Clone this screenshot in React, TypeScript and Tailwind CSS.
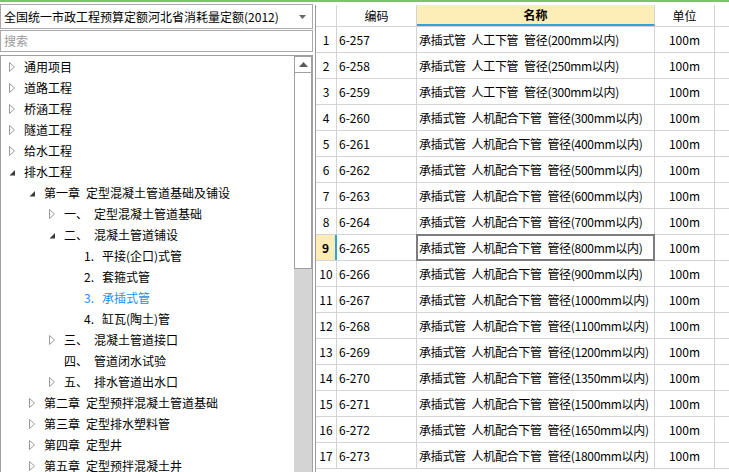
import React from 'react';

type TreeNode = {
  level: number;
  icon?: 'open' | 'closed';
  no?: string;
  label: string;
  active?: boolean;
};

const tree: TreeNode[] = [
  { level: 0, icon: 'closed', label: '通用项目' },
  { level: 0, icon: 'closed', label: '道路工程' },
  { level: 0, icon: 'closed', label: '桥涵工程' },
  { level: 0, icon: 'closed', label: '隧道工程' },
  { level: 0, icon: 'closed', label: '给水工程' },
  { level: 0, icon: 'open', label: '排水工程' },
  { level: 1, icon: 'open', no: '第一章', label: '定型混凝土管道基础及铺设' },
  { level: 2, icon: 'closed', no: '一、', label: '定型混凝土管道基础' },
  { level: 2, icon: 'open', no: '二、', label: '混凝土管道铺设' },
  { level: 3, no: '1.', label: '平接(企口)式管' },
  { level: 3, no: '2.', label: '套箍式管' },
  { level: 3, no: '3.', label: '承插式管', active: true },
  { level: 3, no: '4.', label: '缸瓦(陶土)管' },
  { level: 2, icon: 'closed', no: '三、', label: '混凝土管道接口' },
  { level: 2, no: '四、', label: '管道闭水试验' },
  { level: 2, icon: 'closed', no: '五、', label: '排水管道出水口' },
  { level: 1, icon: 'closed', no: '第二章', label: '定型预拌混凝土管道基础' },
  { level: 1, icon: 'closed', no: '第三章', label: '定型排水塑料管' },
  { level: 1, icon: 'closed', no: '第四章', label: '定型井' },
  { level: 1, icon: 'closed', no: '第五章', label: '定型预拌混凝土井' },
];

const indent = ['pl-[8px]', 'pl-[28px]', 'pl-[48px]', 'pl-[68px]'];
const noWidth = ['w-[0px]', 'w-[42px]', 'w-[30px]', 'w-[18px]'];

const rows = [
  ['6-257', '人工下管', '200'],
  ['6-258', '人工下管', '250'],
  ['6-259', '人工下管', '300'],
  ['6-260', '人机配合下管', '300'],
  ['6-261', '人机配合下管', '400'],
  ['6-262', '人机配合下管', '500'],
  ['6-263', '人机配合下管', '600'],
  ['6-264', '人机配合下管', '700'],
  ['6-265', '人机配合下管', '800'],
  ['6-266', '人机配合下管', '900'],
  ['6-267', '人机配合下管', '1000'],
  ['6-268', '人机配合下管', '1100'],
  ['6-269', '人机配合下管', '1200'],
  ['6-270', '人机配合下管', '1350'],
  ['6-271', '人机配合下管', '1500'],
  ['6-272', '人机配合下管', '1650'],
  ['6-273', '人机配合下管', '1800'],
];

function TreeIcon({ kind }: { kind?: 'open' | 'closed' }) {
  if (kind === 'closed') {
    return (
      <svg width="6" height="10" viewBox="0 0 6 10" className="block">
        <path d="M0.5 0.5 L5.5 5 L0.5 9.5 Z" fill="white" stroke="#9a9a9a" strokeWidth="1" />
      </svg>
    );
  }
  if (kind === 'open') {
    return (
      <svg width="7" height="10" viewBox="0 0 7 10" className="block">
        <path d="M6 3 L6 8.5 L0.5 8.5 Z" fill="#3a3a3a" />
      </svg>
    );
  }
  return null;
}

export default function App() {
  return (
    <div className="w-[729px] h-[472px] bg-white overflow-hidden flex flex-col text-[12px] leading-none text-black font-['SimSun','Noto_Sans_CJK_SC',sans-serif]">
      <div className="h-[2px] bg-[#7cc46c] shrink-0" />
      <div className="flex flex-1 min-h-0">
        {/* 左侧 定额树 */}
        <div className="w-[313px] shrink-0 flex flex-col pt-[2px]">
          <div className="h-[25px] border border-[#a9a9a9] flex items-center pl-[3px] pr-[6px]">
            <span className="flex-1 whitespace-nowrap">全国统一市政工程预算定额河北省消耗量定额(2012)</span>
            <svg width="7" height="4" viewBox="0 0 7 4">
              <path d="M0 0 L7 0 L3.5 4 Z" fill="#666" />
            </svg>
          </div>
          <div className="mt-[1px] h-[22px] border border-[#a9a9a9] flex items-center pl-[3px] text-[#9a9a9a]">
            搜索
          </div>
          <div className="mt-[3px] flex-1 min-h-0 border border-[#a0a0a0] border-b-0 flex">
            <div className="flex-1">
              {tree.map((n, i) => (
                <div key={i} className={`h-[21px] flex items-center ${indent[n.level]}`}>
                  <div className="w-[15px] flex items-center">
                    <TreeIcon kind={n.icon} />
                  </div>
                  <div className={`flex items-center whitespace-nowrap ${n.active ? 'text-[#1e8fe8]' : ''}`}>
                    {n.no && <span className={`inline-block ${noWidth[n.level]}`}>{n.no}</span>}
                    <span>{n.label}</span>
                  </div>
                </div>
              ))}
            </div>
            <div className="w-[18px] flex flex-col">
              <div className="h-[17px] border border-[#a0a0a0] flex items-center justify-center bg-white">
                <svg width="9" height="5" viewBox="0 0 9 5">
                  <path d="M0 5 L4.5 0 L9 5 Z" fill="#5a5a5a" />
                </svg>
              </div>
              <div className="h-[196px] border-x border-b border-[#a0a0a0] bg-white" />
              <div className="flex-1 bg-[#d4d4d4]" />
            </div>
          </div>
        </div>

        <div className="w-[2px] shrink-0" />

        {/* 右侧 定额子目表 */}
        <div className="flex-1 min-w-0 pt-[3px]">
          <div className="border-l border-[#9a9a9a] h-full">
            <div className="h-[22px] flex border-b border-[#d4d4d4]">
              <div className="w-[21px] border-r border-[#d4d4d4]" />
              <div className="w-[80px] border-r border-[#d4d4d4] flex items-center justify-center">编码</div>
              <div className="w-[238px] border-r border-[#d4d4d4] flex items-center justify-center font-bold bg-[#fdedb7] border-b-2 border-b-[#2ea3d8]">
                名称
              </div>
              <div className="w-[60px] border-r border-[#d4d4d4] flex items-center justify-center">单位</div>
              <div className="flex-1" />
            </div>
            {rows.map((r, i) => {
              const sel = i === 8;
              return (
                <div key={i} className="h-[26px] flex border-b border-[#d4d4d4]">
                  <div
                    className={`w-[21px] flex items-center justify-center ${
                      sel ? 'bg-[#fdecb6] font-bold border-r-2 border-[#2ea3d8]' : 'border-r border-[#d4d4d4]'
                    }`}
                  >
                    {i + 1}
                  </div>
                  <div className="w-[80px] border-r border-[#d4d4d4] flex items-center pl-[2px]">{r[0]}</div>
                  <div className="relative w-[238px] border-r border-[#d4d4d4] flex items-center pl-[2px] whitespace-nowrap tracking-[-0.3px]">
                    {`承插式管\u2002${r[1]}\u2002管径(${r[2]}mm以内)`}
                    {sel && <div className="absolute -left-px -top-px right-[-1px] bottom-[-1px] border-2 border-[#7d7d7d]" />}
                  </div>
                  <div className="w-[60px] border-r border-[#d4d4d4] flex items-center justify-center">100m</div>
                  <div className="flex-1" />
                </div>
              );
            })}
          </div>
        </div>
      </div>
    </div>
  );
}
